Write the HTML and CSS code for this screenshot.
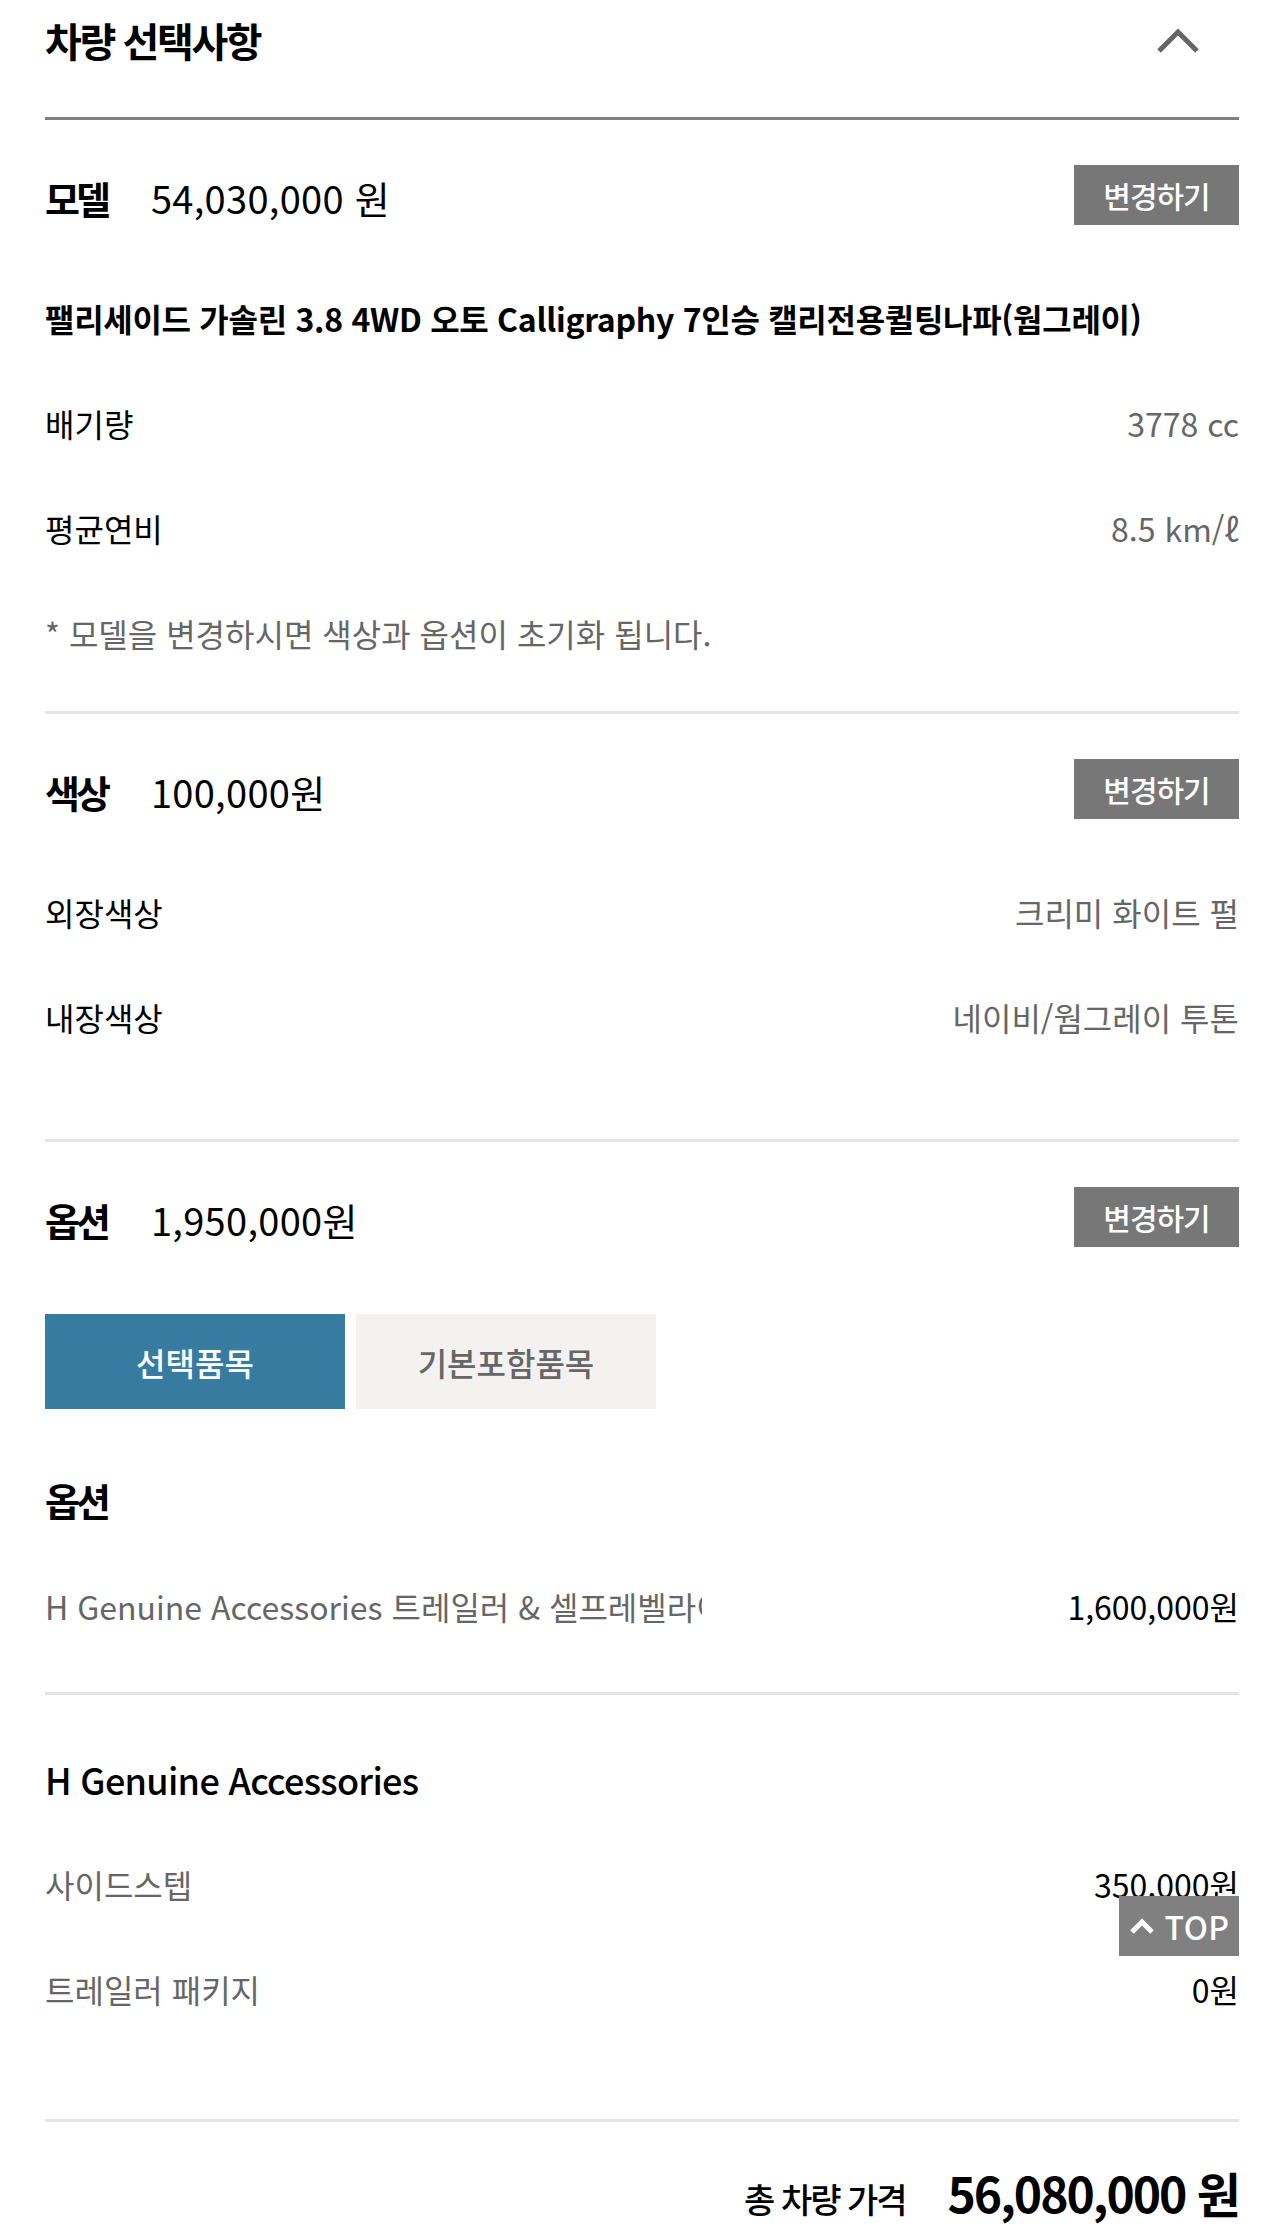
FILE: index.html
```html
<!DOCTYPE html>
<html lang="ko">
<head>
    <meta charset="UTF-8">
    <meta name="viewport" content="width=device-width, initial-scale=1.0">
    <title>차량 선택사항</title>
    <link rel="stylesheet" href="styles.css">
</head>
<body>
    <div class="summary">
        <div class="summary-header">
            <h2 class="summary-title">차량 선택사항</h2>
            <button class="fold-btn" type="button" aria-label="접기">
                <svg width="46" height="30" viewBox="0 0 46 30">
                    <polyline points="4,26 23,7 42,26" fill="none" stroke="#666" stroke-width="5"/>
                </svg>
            </button>
        </div>

        <!-- 모델 -->
        <section class="block">
            <div class="block-head">
                <div class="block-label">
                    <strong>모델</strong>
                    <span>54,030,000 원</span>
                </div>
                <button class="change-btn" type="button">변경하기</button>
            </div>
            <ul class="info">
                <li class="model-name">팰리세이드 가솔린 3.8 4WD 오토 Calligraphy 7인승 캘리전용퀼팅나파(웜그레이)</li>
                <li class="info-row"><span>배기량</span><em>3778 cc</em></li>
                <li class="info-row"><span>평균연비</span><em>8.5 km/ℓ</em></li>
                <li class="note">* 모델을 변경하시면 색상과 옵션이 초기화 됩니다.</li>
            </ul>
        </section>

        <!-- 색상 -->
        <section class="block block-color">
            <div class="block-head">
                <div class="block-label">
                    <strong>색상</strong>
                    <span>100,000원</span>
                </div>
                <button class="change-btn" type="button">변경하기</button>
            </div>
            <ul class="info">
                <li class="info-row"><span>외장색상</span><em>크리미 화이트 펄</em></li>
                <li class="info-row"><span>내장색상</span><em>네이비/웜그레이 투톤</em></li>
            </ul>
        </section>

        <!-- 옵션 -->
        <section class="block block-option">
            <div class="block-head">
                <div class="block-label">
                    <strong>옵션</strong>
                    <span>1,950,000원</span>
                </div>
                <button class="change-btn" type="button">변경하기</button>
            </div>
            <div class="tabs">
                <button class="tab active" type="button">선택품목</button>
                <button class="tab" type="button">기본포함품목</button>
            </div>
            <h3 class="sub-title">옵션</h3>
            <ul class="opt-list">
                <li class="opt-row">
                    <span class="opt-name opt-clip">H Genuine Accessories 트레일러 &amp; 셀프레벨라이저 패키지</span>
                    <span class="opt-price">1,600,000원</span>
                </li>
            </ul>
        </section>

        <section class="block block-acc">
            <h3 class="acc-title">H Genuine Accessories</h3>
            <ul class="opt-list">
                <li class="opt-row">
                    <span class="opt-name">사이드스텝</span>
                    <span class="opt-price">350,000원</span>
                </li>
                <li class="opt-row">
                    <span class="opt-name">트레일러 패키지</span>
                    <span class="opt-price">0원</span>
                </li>
            </ul>
        </section>

        <div class="total">
            <span class="total-label">총 차량 가격</span>
            <strong class="total-price">56,080,000 원</strong>
        </div>
    </div>

    <a href="#" class="top-btn">
        <svg width="28" height="18" viewBox="0 0 28 18">
            <polyline points="4,15 14,5 24,15" fill="none" stroke="#fff" stroke-width="5"/>
        </svg>
        TOP
    </a>
</body>
</html>
```

FILE: styles.css
```css
* {
    box-sizing: border-box;
}

body {
    font-family: "Noto Sans CJK KR", "Noto Sans", sans-serif;
    background-color: #fff;
    color: #000;
    margin: 0;
    padding: 0 45px;
}

ul {
    list-style: none;
    margin: 0;
    padding: 0;
}

button {
    font-family: inherit;
    border: none;
    cursor: pointer;
}

/* 상단 타이틀 */
.summary-header {
    display: flex;
    justify-content: space-between;
    align-items: center;
    height: 120px;
    padding-bottom: 37px;
    border-bottom: 3px solid #7f7f7f;
}

.summary-title {
    margin: 0;
    font-size: 40px;
    font-weight: 700;
    letter-spacing: -2.4px;
    line-height: 80px;
}

.fold-btn {
    background: none;
    padding: 0;
    margin-right: 38px;
    display: flex;
}

/* 블록 */
.block {
    padding: 45px 0 57px;
    border-bottom: 3px solid #e5e5e5;
}

.block-color {
    padding-bottom: 101px;
}

.block-option {
    padding-bottom: 65px;
}

.block-acc {
    padding: 62px 0 109px;
}

.block-head {
    display: flex;
    justify-content: space-between;
    align-items: center;
    height: 60px;
}

.block-label {
    display: flex;
    align-items: center;
    gap: 44px;
    font-size: 38px;
    padding-top: 4px;
}

.block-label strong {
    font-weight: 700;
    letter-spacing: -4px;
}

.block-label span {
    font-weight: 400;
    letter-spacing: 0.3px;
}

.change-btn {
    width: 165px;
    height: 60px;
    background-color: #777;
    color: #fff;
    font-size: 30px;
    font-weight: 500;
    letter-spacing: -1px;
}

.info {
    display: flex;
    flex-direction: column;
    gap: 63px;
    margin-top: 72px;
    font-size: 32px;
    line-height: 42px;
    letter-spacing: 0;
}

.model-name {
    font-weight: 700;
    letter-spacing: -0.3px;
}

.info-row {
    display: flex;
    justify-content: space-between;
}

.info-row em {
    font-style: normal;
    color: #666;
}

.note {
    color: #666;
}

/* 탭 */
.tabs {
    display: flex;
    gap: 11px;
    margin-top: 67px;
}

.tab {
    width: 300px;
    height: 95px;
    background-color: #f3f2f1;
    color: #666;
    font-size: 32px;
    font-weight: 500;
    letter-spacing: 0;
}

.tab.active {
    background-color: #387ba1;
    color: #fff;
}

.sub-title {
    margin: 68px 0 0;
    font-size: 38px;
    font-weight: 700;
    letter-spacing: -4px;
    line-height: 46px;
}

.acc-title {
    margin: 0;
    font-size: 36px;
    font-weight: 500;
    letter-spacing: -0.7px;
    line-height: 44px;
}

.opt-list {
    display: flex;
    flex-direction: column;
    gap: 63px;
    margin-top: 62px;
    font-size: 32px;
    line-height: 42px;
}

.opt-row {
    display: flex;
    justify-content: space-between;
}

.opt-name {
    color: #666;
}

.opt-clip {
    max-width: 657px;
    overflow: hidden;
    white-space: nowrap;
}

.opt-price {
    color: #000;
}

/* 합계 */
.total {
    display: flex;
    justify-content: flex-end;
    align-items: baseline;
    gap: 42px;
    margin-top: 40px;
    line-height: 60px;
}

.total-label {
    font-size: 34px;
    font-weight: 500;
    letter-spacing: -2px;
}

.total-price {
    font-size: 48px;
    font-weight: 700;
    letter-spacing: -2px;
}

/* TOP 버튼 */
.top-btn {
    position: fixed;
    right: 45px;
    bottom: 269px;
    width: 120px;
    height: 60px;
    display: flex;
    align-items: center;
    justify-content: center;
    gap: 8px;
    background-color: #808080;
    color: #fff;
    font-size: 32px;
    font-weight: 500;
    text-decoration: none;
    letter-spacing: 0.5px;
}
```
